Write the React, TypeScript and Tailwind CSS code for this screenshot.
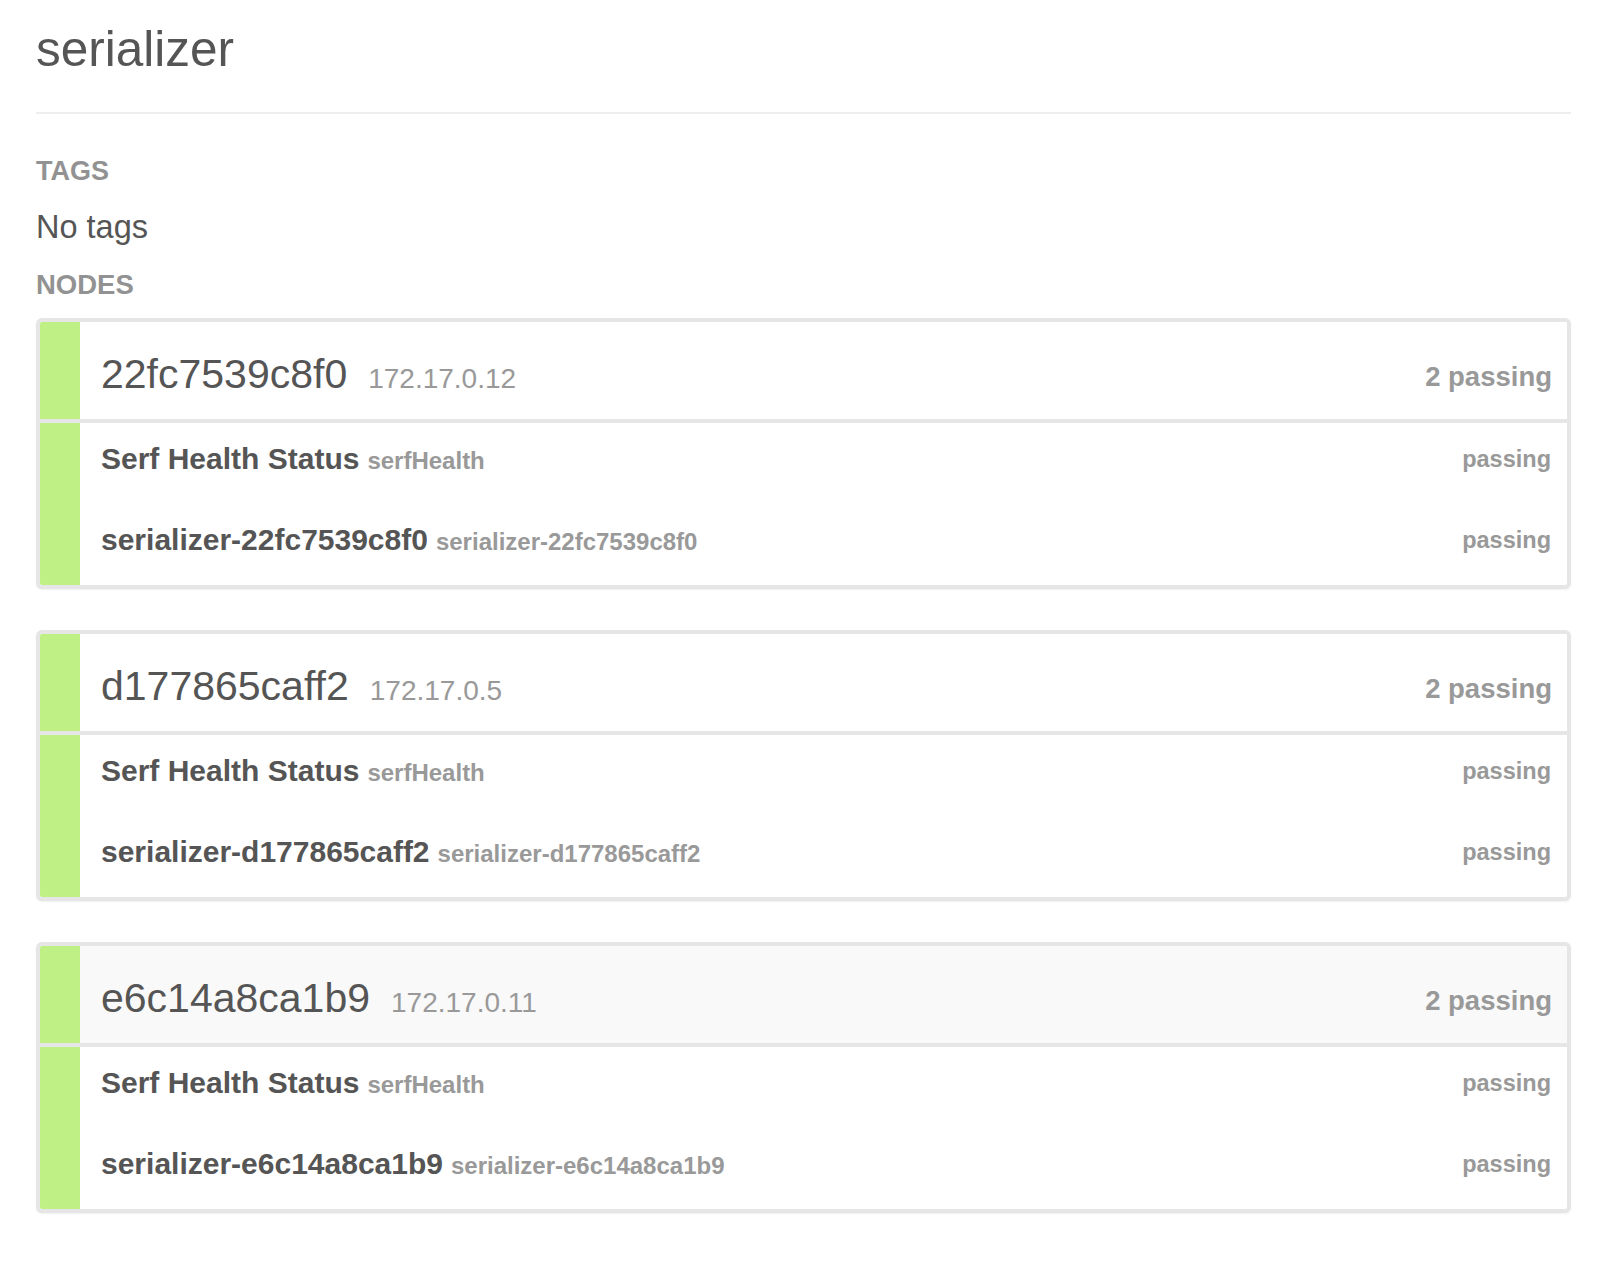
import React from "react";

type Check = { name: string; id: string; status: string };
type Node = { name: string; ip: string; summary: string; checks: Check[]; hover?: boolean };

const nodes: Node[] = [
  {
    name: "22fc7539c8f0",
    ip: "172.17.0.12",
    summary: "2 passing",
    checks: [
      { name: "Serf Health Status", id: "serfHealth", status: "passing" },
      { name: "serializer-22fc7539c8f0", id: "serializer-22fc7539c8f0", status: "passing" },
    ],
  },
  {
    name: "d177865caff2",
    ip: "172.17.0.5",
    summary: "2 passing",
    checks: [
      { name: "Serf Health Status", id: "serfHealth", status: "passing" },
      { name: "serializer-d177865caff2", id: "serializer-d177865caff2", status: "passing" },
    ],
  },
  {
    name: "e6c14a8ca1b9",
    ip: "172.17.0.11",
    summary: "2 passing",
    hover: true,
    checks: [
      { name: "Serf Health Status", id: "serfHealth", status: "passing" },
      { name: "serializer-e6c14a8ca1b9", id: "serializer-e6c14a8ca1b9", status: "passing" },
    ],
  },
];

function NodeCard({ node }: { node: Node }) {
  return (
    <div className="rounded-[6px] border-4 border-[#e6e6e6] overflow-hidden bg-white shadow-[0_1px_2px_rgba(0,0,0,0.06)]">
      <div className={`flex h-[101px] border-b-4 border-[#e6e6e6] ${node.hover ? "bg-[#f9f9f9]" : "bg-white"}`}>
        <div className="w-[40px] shrink-0 bg-[#bef085]" />
        <div className="flex flex-1 items-center justify-between pl-[21px] pr-[15px] pt-[10px]">
          <div className="flex items-baseline">
            <span className="text-[41px] leading-[46px] text-[#555555]">{node.name}</span>
            <span className="ml-[21px] text-[28px] text-[#999999]">{node.ip}</span>
          </div>
          <span className="mt-[2px] text-[27.5px] font-bold text-[#999999]">{node.summary}</span>
        </div>
      </div>
      <div className="flex">
        <div className="w-[40px] shrink-0 bg-[#bef085]" />
        <div className="flex flex-1 flex-col">
          {node.checks.map((c, i) => (
            <div key={i} className="flex h-[81px] items-start justify-between pl-[21px] pr-[16px] pt-[19px]">
              <div className="flex items-baseline">
                <span className="text-[30px] leading-[34px] font-bold text-[#555555]">{c.name}</span>
                <span className="ml-[8px] text-[24px] font-bold text-[#999999]">{c.id}</span>
              </div>
              <span className="self-baseline text-[23.5px] leading-[34px] font-bold text-[#999999]">{c.status}</span>
            </div>
          ))}
        </div>
      </div>
    </div>
  );
}

export default function App() {
  return (
    <div
      className="min-h-[1266px] bg-white pl-[36px] pr-[49px] pt-[20px]"
      style={{ fontFamily: '"Liberation Sans", Arial, Helvetica, sans-serif' }}
    >
      <h1 className="text-[49.5px] leading-[58px] text-[#555555]">serializer</h1>
      <div className="mt-[34px] h-[2px] bg-[#eeeeee]" />
      <div className="mt-[41px] text-[27px] leading-[32px] font-bold text-[#929292]">TAGS</div>
      <div className="mt-[21px] text-[32.5px] leading-[38px] text-[#555555]">No tags</div>
      <div className="mt-[23px] text-[27.5px] leading-[32px] font-bold text-[#929292]">NODES</div>
      <div className="mt-[17px] flex flex-col gap-[41px]">
        {nodes.map((n) => (
          <NodeCard key={n.name} node={n} />
        ))}
      </div>
    </div>
  );
}
